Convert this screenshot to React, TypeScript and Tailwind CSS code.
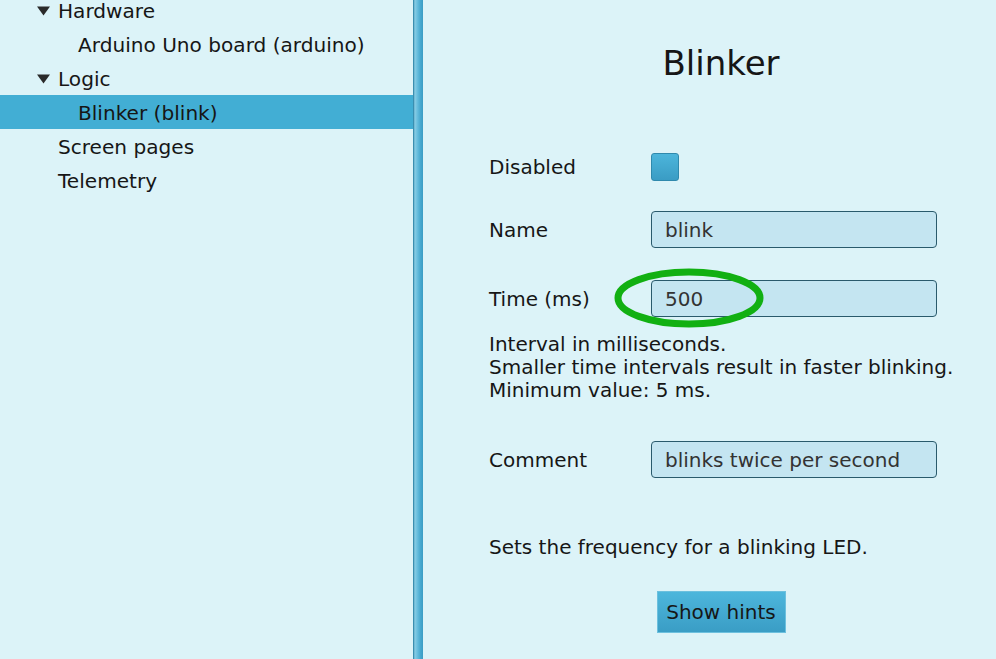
import React from "react";

const Tri = () => (
  <svg width="13" height="10" viewBox="0 0 13 10" className="shrink-0">
    <polygon points="0,0.5 13,0.5 6.5,9.5" fill="#2a2a2a" />
  </svg>
);

type Row = { label: string; level: number; arrow?: boolean; selected?: boolean };

const rows: Row[] = [
  { label: "Hardware", level: 0, arrow: true },
  { label: "Arduino Uno board (arduino)", level: 1 },
  { label: "Logic", level: 0, arrow: true },
  { label: "Blinker (blink)", level: 1, selected: true },
  { label: "Screen pages", level: 0 },
  { label: "Telemetry", level: 0 },
];

export default function App() {
  return (
    <div
      className="flex h-[659px] w-[996px] overflow-hidden bg-[#dcf3f8] text-[20px] text-[#161616]"
      style={{ fontFamily: '"DejaVu Sans", sans-serif' }}
    >
      {/* Tree panel */}
      <div className="w-[413px] shrink-0">
        <div className="mt-[-7px] flex flex-col">
          {rows.map((r) => (
            <div
              key={r.label}
              className={`flex h-[34px] items-center pt-[1px] text-[20.1px] ${r.selected ? "bg-[#42aed4]" : ""}`}
            >
              {r.arrow ? (
                <div className="flex w-[58px] justify-end pr-[8px]">
                  <Tri />
                </div>
              ) : (
                <div className={r.level === 1 ? "w-[78px]" : "w-[58px]"} />
              )}
              <span className="whitespace-nowrap leading-[24px]">{r.label}</span>
            </div>
          ))}
        </div>
      </div>

      {/* Splitter */}
      <div className="w-[10px] shrink-0 bg-[linear-gradient(to_right,#3a8fb1_0%,#3a8fb1_8%,#8acde5_18%,#6cc0df_40%,#46a8cf_75%,#3a9cc4_100%)]" />

      {/* Detail panel */}
      <div className="flex-1 pl-[66px] pt-[40px]">
        <div className="w-[464px] flex flex-col">
          <div className="h-[46px] text-center text-[34px] leading-[46px]">Blinker</div>

          <div className="mt-[67px] flex h-[28px] items-center">
            <div className="w-[162px]">Disabled</div>
            <div className="h-[28px] w-[28px] rounded-[3px] border border-[#2f89ad] bg-[linear-gradient(to_bottom,#4cb5db,#3a9cc4)]" />
          </div>

          <div className="mt-[30px] flex h-[37px] items-center">
            <div className="w-[162px] pt-[1px]">Name</div>
            <div className="flex h-[37px] w-[286px] items-center rounded-[4px] border border-[#2a5a6c] bg-[#c4e5f1] pl-[13px] pt-[1px] text-[#333]">
              blink
            </div>
          </div>

          <div className="relative mt-[32px] flex h-[37px] items-center">
            <div className="w-[162px]">Time (ms)</div>
            <div className="flex h-[37px] w-[286px] items-center rounded-[4px] border border-[#2a5a6c] bg-[#c4e5f1] pl-[13px] text-[#333]">
              500
            </div>
            <svg
              className="absolute left-[123px] top-[-13px]"
              width="156"
              height="64"
              viewBox="0 0 156 64"
            >
              <ellipse cx="77" cy="31" rx="71" ry="26" fill="none" stroke="#12b012" strokeWidth="7" />
            </svg>
          </div>

          <div className="mt-[16px] leading-[23px]">
            <div>Interval in milliseconds.</div>
            <div className="whitespace-nowrap">Smaller time intervals result in faster blinking.</div>
            <div>Minimum value: 5 ms.</div>
          </div>

          <div className="mt-[39px] flex h-[37px] items-center">
            <div className="w-[162px] pt-[1px]">Comment</div>
            <div className="flex h-[37px] w-[286px] items-center rounded-[4px] border border-[#2a5a6c] bg-[#c4e5f1] pl-[13px] pt-[1px] text-[#333]">
              blinks twice per second
            </div>
          </div>

          <div className="mt-[58px] leading-[23px]">Sets the frequency for a blinking LED.</div>

          <div className="mt-[32px] flex justify-center">
            <div className="flex h-[42px] w-[129px] items-center justify-center border border-[#6cc0de] bg-[linear-gradient(to_bottom,#4db6dc,#3a9dc5)]">
              Show hints
            </div>
          </div>
        </div>
      </div>
    </div>
  );
}
